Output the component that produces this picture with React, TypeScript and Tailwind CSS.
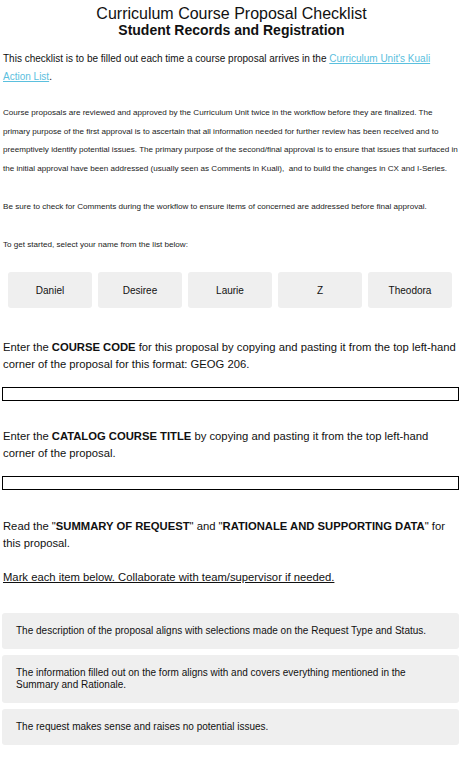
export default function App() {
  const names = ["Daniel", "Desiree", "Laurie", "Z", "Theodora"];
  const items = [
    "The description of the proposal aligns with selections made on the Request Type and Status.",
    "The information filled out on the form aligns with and covers everything mentioned in the Summary and Rationale.",
    "The request makes sense and raises no potential issues.",
  ];

  return (
    <div className="w-[461px] bg-white pl-[2px] text-[#111] font-['Liberation_Sans',Arial,sans-serif]">
      {/* Header */}
      <div className="pt-[5px] text-center">
        <h1 className="text-[16px] leading-[18px] font-normal">Curriculum Course Proposal Checklist</h1>
        <h2 className="text-[14px] leading-[14px] font-bold">Student Records and Registration</h2>
      </div>

      <p className="mt-[13px] w-[455px] pl-[1px] text-[10px] leading-[18px]">
        This checklist is to be filled out each time a course proposal arrives in the{" "}
        <a href="#" className="text-[#5bc0de] underline">
          Curriculum Unit's Kuali Action List
        </a>
        .
      </p>

      <p className="mt-[18px] w-[459px] pl-[1px] text-[8.1px] leading-[18.5px] text-[#222]">
        Course proposals are reviewed and approved by the Curriculum Unit twice in the workflow before they are
        finalized. The primary purpose of the first approval is to ascertain that all information needed for further
        review has been received and to preemptively identify potential issues. The primary purpose of the
        second/final approval is to ensure that issues that surfaced in the initial approval have been addressed
        (usually seen as Comments in Kuali),&nbsp; and to build the changes in CX and I-Series.
      </p>

      <p className="mt-[20px] pl-[1px] text-[8.1px] leading-[18px] text-[#222]">
        Be sure to check for Comments during the workflow to ensure items of concerned are addressed before final
        approval.
      </p>

      <p className="mt-[20px] pl-[1px] text-[8.1px] leading-[18px] text-[#222]">
        To get started, select your name from the list below:
      </p>

      {/* Name buttons */}
      <div className="mt-[18px] flex gap-[6px] pl-[6px]">
        {names.map((n) => (
          <button
            key={n}
            className="h-[36px] w-[84px] rounded-[3px] bg-[#efefef] text-[10px] text-[#111]"
          >
            {n}
          </button>
        ))}
      </div>

      {/* Course code */}
      <p className="mt-[31px] w-[457px] pl-[1px] text-[11.25px] leading-[17px]">
        Enter the <b>COURSE CODE</b> for this proposal by copying and pasting it from the top left-hand corner of the
        proposal for this format: GEOG 206.
      </p>
      <input className="mt-[14px] block h-[14px] w-[457px] border border-black bg-white outline-none" />

      {/* Catalog title */}
      <p className="mt-[27px] w-[457px] pl-[1px] text-[11.25px] leading-[17px]">
        Enter the <b>CATALOG COURSE TITLE</b> by copying and pasting it from the top left-hand corner of the proposal.
      </p>
      <input className="mt-[14px] block h-[14px] w-[457px] border border-black bg-white outline-none" />

      <p className="mt-[28px] w-[457px] pl-[1px] text-[11.25px] leading-[17px]">
        Read the "<b>SUMMARY OF REQUEST</b>" and "<b>RATIONALE AND SUPPORTING DATA</b>" for this proposal.
      </p>

      <p className="mt-[17px] pl-[1px] text-[11.25px] leading-[17px] underline">
        Mark each item below. Collaborate with team/supervisor if needed.
      </p>

      {/* Checklist */}
      <div className="mt-[27px] flex flex-col gap-[6px] pb-[19px]">
        {items.map((t) => (
          <div
            key={t}
            className="w-[457px] rounded-[3px] bg-[#efefef] px-[14px] py-[12px] text-[10px] leading-[12px] text-[#111]"
          >
            {t}
          </div>
        ))}
      </div>
    </div>
  );
}
